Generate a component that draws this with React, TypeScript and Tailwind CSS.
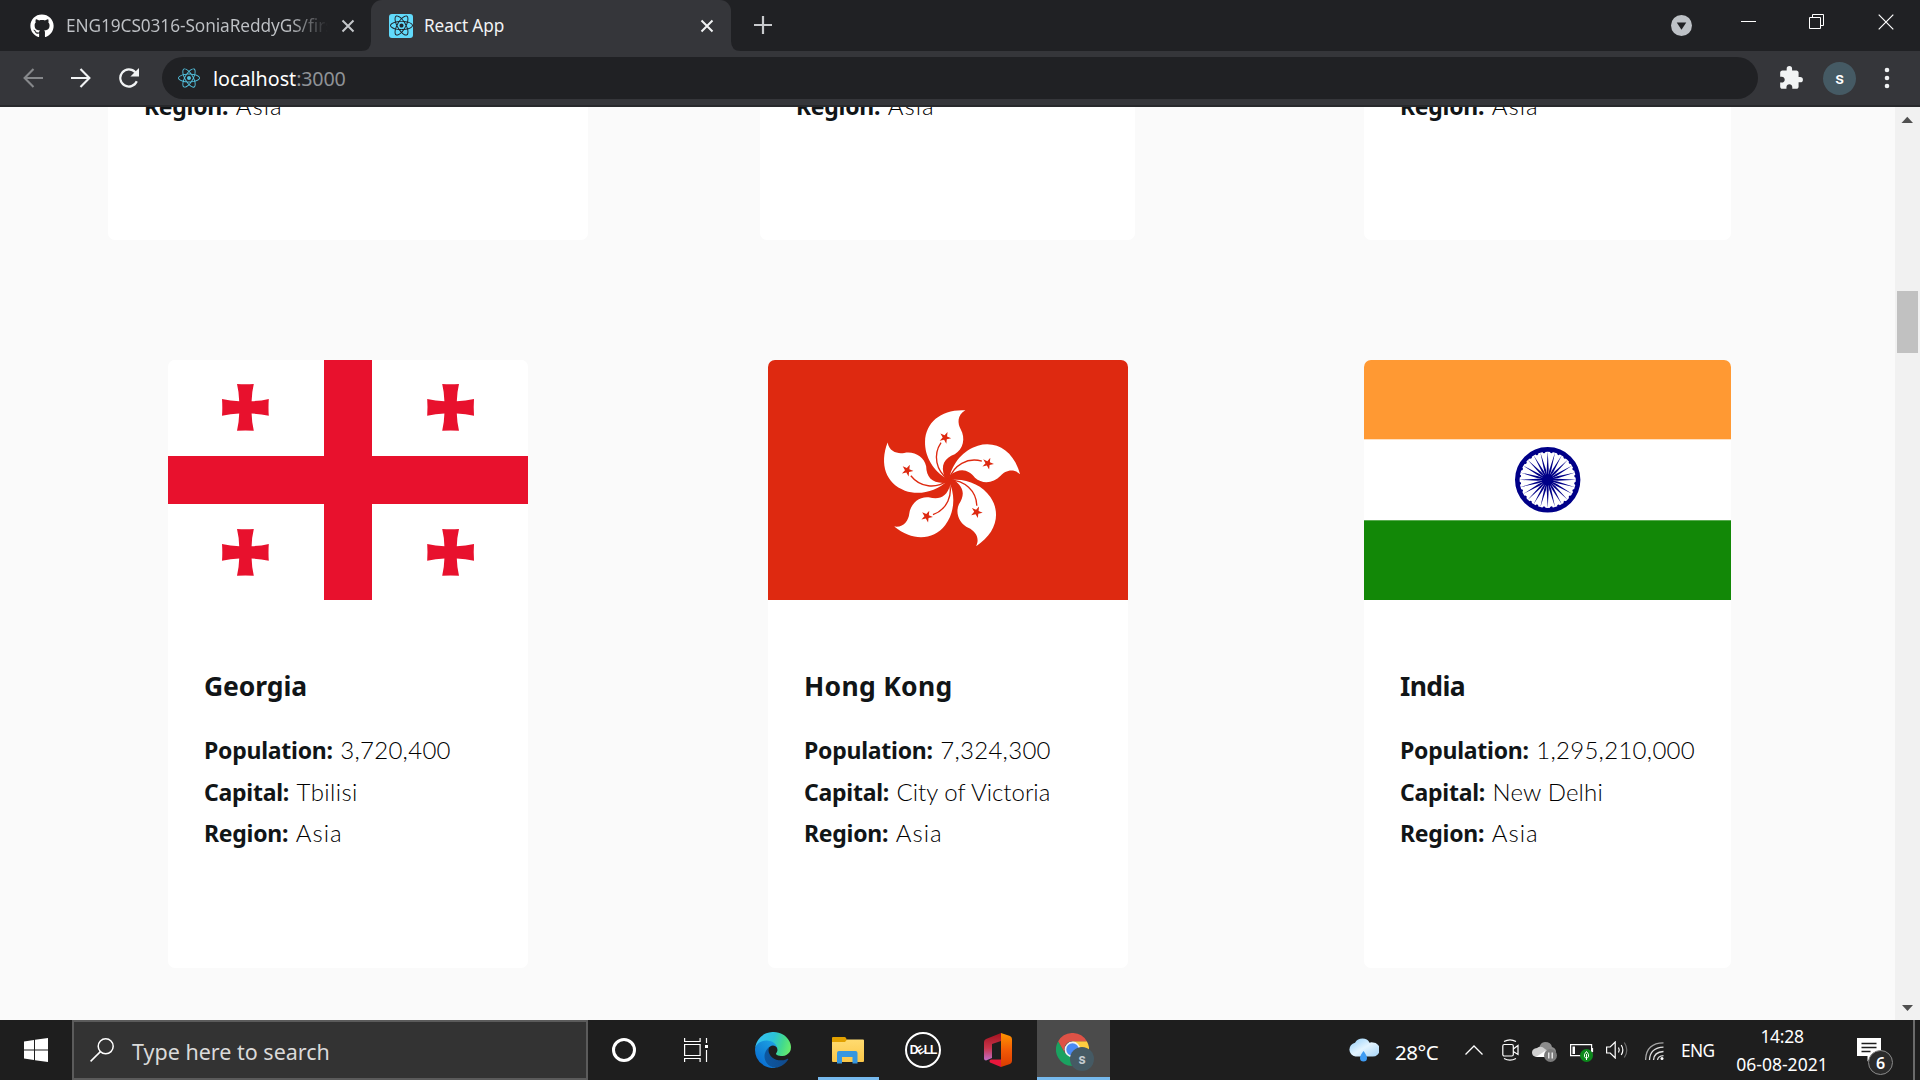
import type { ReactNode } from "react";
import { FaGithub, FaReact } from "react-icons/fa";
import { MdExtension } from "react-icons/md";

/* ---------- Flags ---------- */

function GeorgiaFlag() {
  const centers = [
    [77.4, 47.4],
    [282.6, 47.4],
    [77.4, 192.4],
    [282.6, 192.4],
  ];
  return (
    <svg viewBox="0 0 360 240" className="block h-[240px] w-[360px] rounded-t-[7px]">
      <rect width="360" height="240" fill="#fff" />
      <path d="M156 0h48v96h156v48H204v96h-48v-96H0V96h156z" fill="#e8112d" />
      {centers.map(([x, y]) => (
        <path
          key={`${x}-${y}`}
          transform={`translate(${x} ${y})`}
          fill="#e8112d"
          d="M-8.4-23.4Q0-22.8 8.4-23.4Q6.4-15 6.2-6.2Q15-6.4 23.4-8.4Q22.8 0 23.4 8.4Q15 6.4 6.2 6.2Q6.4 15 8.4 23.4Q0 22.8-8.4 23.4Q-6.4 15-6.2 6.2Q-15 6.4-23.4 8.4Q-22.8 0-23.4-8.4Q-15-6.4-6.2-6.2Q-6.4-15-8.4-23.4z"
        />
      ))}
    </svg>
  );
}

function HongKongFlag() {
  return (
    <svg viewBox="0 0 360 240" className="block h-[240px] w-[360px] rounded-t-[7px]">
      <rect width="360" height="240" fill="#de2910" />
      <g transform="translate(180.7 120) scale(.3333)">
        {[0, 72, 144, 216, 288].map((a) => (
          <g key={a} transform={`rotate(${a})`}>
            <path
              fill="#fff"
              d="M-3-3C-45-25-72-70-71-115C-69-175-20-213 50-209C24-195 27-168 36-152C51-125 44-92 18-77C-12-66-26-45-12-8z"
            />
            <path d="M-23-112C-48-75-38-28-2-2" fill="none" stroke="#de2910" strokeWidth="4" />
            <path
              transform="translate(-11 -127) rotate(24) scale(18.5)"
              fill="#de2910"
              d="M0-1L.225-.309L.951-.309L.363.118L.588.809L0 .382L-.588.809L-.363.118L-.951-.309L-.225-.309z"
            />
          </g>
        ))}
      </g>
    </svg>
  );
}

function IndiaFlag() {
  const spokes = Array.from({ length: 24 }, (_, i) => i * 15);
  return (
    <svg viewBox="0 0 367 240" className="block h-[240px] w-[367px] rounded-t-[7px]">
      <rect width="367" height="240" fill="#fff" />
      <rect width="367" height="79.3" fill="#ff9933" />
      <rect y="160.3" width="367" height="79.7" fill="#128807" />
      <g transform="translate(183.7 119.8)" fill="#000088">
        <circle r="30.4" fill="none" stroke="#000088" strokeWidth="4.6" />
        <circle r="5.8" />
        {spokes.map((a) => (
          <g key={a} transform={`rotate(${a})`}>
            <path d="M0-28.5L1-10L.4 0H-.4L-1-10z" />
            <circle cx="3.7" cy="-28" r="1.4" />
          </g>
        ))}
      </g>
    </svg>
  );
}

/* ---------- Cards ---------- */

function Fact({ label, value, valueClass = "" }: { label: string; value: string; valueClass?: string }) {
  return (
    <div className="flex h-[41.5px] items-baseline whitespace-nowrap leading-[41.5px] text-[#111517]">
      <strong className="font-['Noto_Sans',sans-serif] text-[23px] font-bold tracking-[-0.25px]">{label}:</strong>
      <span className={`ml-[7.5px] font-['Lato',sans-serif] text-[24px] font-light text-black ${valueClass}`}>{value}</span>
    </div>
  );
}

function PartialCard({ width }: { width: string }) {
  return (
    <div className={`h-[133px] overflow-hidden rounded-b-[7px] bg-white px-9 ${width}`}>
      <div className="-mt-[22.5px]">
        <Fact label="Region" value="Asia" valueClass="tracking-[1px]" />
      </div>
    </div>
  );
}

type Country = { name: string; title?: string; flag: ReactNode; width: string; facts: [string, string, string][] };

const countries: Country[] = [
  {
    name: "Georgia",
    title: "tracking-[-0.1px]",
    flag: <GeorgiaFlag />,
    width: "w-[360px]",
    facts: [
      ["Population", "3,720,400", "tracking-[0.3px]"],
      ["Capital", "Tbilisi", "tracking-[0.4px]"],
      ["Region", "Asia", "tracking-[1px]"],
    ],
  },
  {
    name: "Hong Kong",
    title: "tracking-[0.3px]",
    flag: <HongKongFlag />,
    width: "w-[360px]",
    facts: [
      ["Population", "7,324,300", "tracking-[0.3px]"],
      ["Capital", "City of Victoria", "tracking-[0px]"],
      ["Region", "Asia", "tracking-[1px]"],
    ],
  },
  {
    name: "India",
    title: "tracking-[-0.6px]",
    flag: <IndiaFlag />,
    width: "w-[367px]",
    facts: [
      ["Population", "1,295,210,000", "tracking-[0.3px]"],
      ["Capital", "New Delhi", "tracking-[0.15px]"],
      ["Region", "Asia", "tracking-[1px]"],
    ],
  },
];

function CountryCard({ name, title = "", flag, width, facts }: Country) {
  return (
    <article className={`h-[608px] rounded-[7px] bg-white ${width}`}>
      {flag}
      <div className="px-9 pt-[68px]">
        <h2
          className={`mb-[25px] h-9 whitespace-nowrap font-['Noto_Sans',sans-serif] text-[26.5px] font-bold leading-9 text-[#111517] ${title}`}
        >
          {name}
        </h2>
        {facts.map(([label, value, cls]) => (
          <Fact key={label} label={label} value={value} valueClass={cls} />
        ))}
      </div>
    </article>
  );
}

function Scrollbar() {
  return (
    <div className="flex w-[25px] shrink-0 flex-col items-center bg-[#f1f1f1]">
      <svg viewBox="0 0 25 26" className="h-[26px] w-[25px] shrink-0">
        <path d="M6.5 16L12.3 9.8L18 16z" fill="#505050" />
      </svg>
      <div className="mt-[158px] h-[62px] w-[21px] bg-[#c1c1c1]" />
      <svg viewBox="0 0 25 26" className="mt-auto h-[26px] w-[25px] shrink-0">
        <path d="M7 11L12.5 17L18 11z" fill="#505050" />
      </svg>
    </div>
  );
}

/* ---------- Browser chrome ---------- */

function CloseIcon({ color }: { color: string }) {
  return (
    <svg viewBox="0 0 14 14" className="h-3.5 w-3.5 shrink-0">
      <path d="M1.5 1.5l11 11M12.5 1.5l-11 11" stroke={color} strokeWidth="2" />
    </svg>
  );
}

function TabBar() {
  return (
    <div className="flex h-[51px] bg-[#202124] font-['Noto_Sans',sans-serif]">
      <div className="flex h-[51px] w-[371px] items-center pl-[30px]">
        <FaGithub className="h-6 w-6 shrink-0 text-white" />
        <div className="ml-[12px] w-[262px] overflow-hidden whitespace-nowrap bg-gradient-to-r from-[#bfc2c6] from-85% to-transparent bg-clip-text text-[17.3px] leading-7 tracking-[-0.1px] text-transparent">
          ENG19CS0316-SoniaReddyGS/first
        </div>
        <div className="ml-[13px]">
          <CloseIcon color="#c4c7ca" />
        </div>
      </div>
      <div className="relative flex h-[51px] w-[360px] items-center rounded-t-[11px] bg-[#35363a] pl-[18px]">
        <svg viewBox="0 0 10 10" className="absolute bottom-0 -left-[10px] h-[10px] w-[10px]">
          <path d="M10 0v10H0Q10 10 10 0z" fill="#35363a" />
        </svg>
        <svg viewBox="0 0 10 10" className="absolute -right-[10px] bottom-0 h-[10px] w-[10px]">
          <path d="M0 0v10h10Q0 10 0 0z" fill="#35363a" />
        </svg>
        <div className="flex h-6 w-6 items-center justify-center rounded-[3px] bg-[#61dafb]">
          <FaReact className="h-[23px] w-[23px] text-[#20232a]" />
        </div>
        <span className="ml-[11px] text-[17.2px] leading-7 tracking-[-0.1px] text-[#f1f3f4]">React App</span>
        <div className="mr-[17px] ml-auto">
          <CloseIcon color="#f1f3f4" />
        </div>
      </div>
      <svg viewBox="0 0 18 18" className="mt-4 ml-[23px] h-[18px] w-[18px]">
        <path d="M9 0v18M0 9h18" stroke="#c8cacd" strokeWidth="2.2" />
      </svg>
      <div className="ml-auto flex h-[43px] items-center">
        <svg viewBox="0 0 22 22" className="mt-[8px] mr-[49px] h-[21px] w-[21px]">
          <circle cx="11" cy="11" r="11" fill="#bdc1c6" />
          <path d="M6 7.8h10L11 15.5z" fill="#202124" />
        </svg>
        <div className="mr-[53px] h-px w-[15px] bg-white" />
        <svg viewBox="0 0 15 15" className="mr-[54px] h-[15px] w-[15px]" fill="none" stroke="#fff">
          <path d="M.5 3.5h11v11H.5zM3.5 3.5v-3h11v11h-3" />
        </svg>
        <svg viewBox="0 0 16 16" className="mr-[26px] h-4 w-4">
          <path d="M.7.7l14.6 14.6M15.3.7L.7 15.3" stroke="#fff" strokeWidth="1.2" />
        </svg>
      </div>
    </div>
  );
}

function Toolbar() {
  return (
    <div className="flex h-[56px] items-center border-b-2 border-[#28292c] bg-[#35363a] font-['Noto_Sans',sans-serif]">
      <svg viewBox="0 0 20 20" className="ml-[23px] h-5 w-5" fill="none" stroke="#86888b" strokeWidth="2.1">
        <path d="M20 10H1.8M10.5 1L1.6 10l8.9 9" />
      </svg>
      <svg viewBox="0 0 20 20" className="ml-[28px] h-5 w-5" fill="none" stroke="#f1f3f4" strokeWidth="2.1">
        <path d="M0 10h18.2M9.5 1l8.9 9-8.9 9" />
      </svg>
      <svg viewBox="0 0 20 20" className="ml-[28px] h-5 w-5">
        <path d="M17.8 13.3A8.6 8.6 0 1 1 16.3 4.2" fill="none" stroke="#f1f3f4" strokeWidth="2.2" />
        <path d="M20 0v8.6h-8.6z" fill="#f1f3f4" />
      </svg>
      <div className="ml-[23px] flex h-[42px] w-[1596px] items-center rounded-full bg-[#202124] pl-[16px]">
        <FaReact className="h-[22px] w-[22px] text-[#53c1de]" />
        <span className="mt-[2px] ml-[13px] text-[19.7px] leading-8 text-white">localhost</span>
        <span className="mt-[2px] text-[19.7px] leading-8 tracking-[-0.2px] text-[#8f9296]">:3000</span>
      </div>
      <MdExtension className="ml-[20px] h-[26px] w-[26px] text-[#f1f3f4]" />
      <div className="ml-[19px] flex h-[33px] w-[33px] items-center justify-center rounded-full bg-[#455a64] font-['Roboto',sans-serif] text-[17px] font-medium leading-none text-white">
        s
      </div>
      <svg viewBox="0 0 6 22" className="ml-[28px] h-[22px] w-[6px]" fill="#f1f3f4">
        <circle cx="3" cy="3" r="2.3" />
        <circle cx="3" cy="11" r="2.3" />
        <circle cx="3" cy="19" r="2.3" />
      </svg>
    </div>
  );
}

/* ---------- Taskbar icons ---------- */

function EdgeIcon() {
  return (
    <svg viewBox="0 0 256 256" className="h-9 w-9">
      <defs>
        <linearGradient id="edgeA" x1="60" y1="180" x2="240" y2="180" gradientUnits="userSpaceOnUse">
          <stop offset="0" stopColor="#0c59a4" />
          <stop offset="1" stopColor="#114a8b" />
        </linearGradient>
        <linearGradient id="edgeB" x1="150" y1="100" x2="45" y2="220" gradientUnits="userSpaceOnUse">
          <stop offset="0" stopColor="#1b9de2" />
          <stop offset=".5" stopColor="#1488d8" />
          <stop offset="1" stopColor="#0b72d4" />
        </linearGradient>
        <linearGradient id="edgeC" x1="20" y1="60" x2="250" y2="130" gradientUnits="userSpaceOnUse">
          <stop offset="0" stopColor="#35c1f1" />
          <stop offset=".45" stopColor="#2cc3d8" />
          <stop offset=".75" stopColor="#42d98f" />
          <stop offset="1" stopColor="#66eb6e" />
        </linearGradient>
      </defs>
      <g transform="translate(-4.63 -4.92)">
        <path
          fill="url(#edgeA)"
          d="M235.68 195.46a93.73 93.73 0 0 1-10.54 4.71 101.87 101.87 0 0 1-35.9 6.46c-47.32 0-88.54-32.55-88.54-74.32A31.48 31.48 0 0 1 117.13 105c-42.8 1.8-53.8 46.4-53.8 72.53 0 73.88 68.09 81.37 82.76 81.37 7.91 0 19.84-2.3 27-4.56l1.31-.44a128.34 128.34 0 0 0 66.6-52.8 4 4 0 0 0-5.32-5.64z"
        />
        <path
          fill="url(#edgeB)"
          d="M110.34 246.34A79.2 79.2 0 0 1 87.6 225a80.72 80.72 0 0 1 29.53-120c3.12-1.47 8.45-4.13 15.54-4a32.35 32.35 0 0 1 25.69 13 31.88 31.88 0 0 1 6.36 18.66c0-.21 24.46-79.6-80-79.6-43.9 0-80 41.66-80 78.21a130.15 130.15 0 0 0 12.11 56 128 128 0 0 0 156.38 67.11 75.55 75.55 0 0 1-62.78-8z"
        />
        <path
          fill="url(#edgeC)"
          d="M156.94 153.78c-.81 1.05-3.3 2.5-3.3 5.66 0 2.61 1.7 5.12 4.72 7.23 14.38 10 41.49 8.68 41.56 8.68a59.56 59.56 0 0 0 30.27-8.35A61.38 61.38 0 0 0 260.62 114c.26-22.41-8-37.31-11.34-43.91-21.19-41.44-66.93-65.25-116.67-65.25a128 128 0 0 0-128 126.2c.48-36.54 36.8-66.05 80-66.05 3.5 0 23.46.34 42 10.07 16.34 8.58 24.9 18.94 30.85 29.21 6.18 10.67 7.28 24.15 7.28 29.52s-2.74 13.33-7.8 19.99z"
        />
      </g>
    </svg>
  );
}

function ExplorerIcon() {
  return (
    <svg viewBox="0 0 32 28" className="h-7 w-8">
      <defs>
        <linearGradient id="folder" x1="0" y1="0" x2="0" y2="1">
          <stop offset="0" stopColor="#ffdb70" />
          <stop offset="1" stopColor="#fbc748" />
        </linearGradient>
      </defs>
      <path d="M0 2q0-1 1-1h11.5q1 0 1.5 1l1 2v4H0z" fill="#e2a100" />
      <path d="M0 6h13l2-2.5h16q1 0 1 1V25q0 1-1 1H1q-1 0-1-1z" fill="url(#folder)" />
      <path d="M5 27.500V17q0-2 2-2h16.500q2 0 2 2v10.500h-5v-6.500h-10.500v6.500z" fill="#3696df" />
    </svg>
  );
}

function DellIcon() {
  return (
    <div className="flex h-9 w-9 items-center justify-center rounded-full border-2 border-white font-['Liberation_Sans',sans-serif] text-[12px] font-bold leading-none tracking-[-1px] text-white">
      <span>D</span>
      <span className="-rotate-[35deg] text-[11px]">E</span>
      <span>L</span>
      <span>L</span>
    </div>
  );
}

function OfficeIcon() {
  return (
    <svg viewBox="0 0 28 34" className="h-[34px] w-7">
      <defs>
        <linearGradient id="offA" x1="0" y1="0" x2="0" y2="1">
          <stop offset="0" stopColor="#a3111d" />
          <stop offset=".55" stopColor="#c8354c" />
          <stop offset="1" stopColor="#c06fc9" />
        </linearGradient>
        <linearGradient id="offB" x1="0" y1="0" x2="0" y2="1">
          <stop offset="0" stopColor="#ff9500" />
          <stop offset=".5" stopColor="#f25a05" />
          <stop offset="1" stopColor="#d83b01" />
        </linearGradient>
      </defs>
      <path d="M17 0v8L8 11v14L2 27.500q-2 0-2-2V9q0-2 2-3z" fill="url(#offA)" />
      <path d="M17 0l9 3q2 1 2 3v22q0 2-2 3l-9 3z" fill="url(#offB)" />
      <path d="M17 26.500V34L6 29.500q-1.500-2 1-3z" fill="#e8173c" />
    </svg>
  );
}

function ChromeIcon() {
  return (
    <div className="relative -ml-[2px] h-[33px] w-[33px]">
      <svg viewBox="0 0 48 48" className="h-[33px] w-[33px]">
        <path d="M24 24V12h20.800A24 24 0 0 1 24 48L34.400 30z" fill="#ffcd40" />
        <path d="M24 24l10.400 6L24 48A24 24 0 0 1 3.200 12L13.600 30z" fill="#1aa260" />
        <path d="M3.200 12A24 24 0 0 1 44.800 12H24a12 12 0 0 0-10.400 18z" fill="#de5246" />
        <circle cx="24" cy="24" r="11.500" fill="#f1f1f1" />
        <circle cx="24" cy="24" r="9" fill="#4a8af4" />
      </svg>
      <div className="absolute top-[14px] left-[14px] flex h-6 w-6 items-center justify-center rounded-full bg-[#455a64] font-['Roboto',sans-serif] text-[14px] font-bold leading-none text-[#c5ccd0]">
        s
      </div>
    </div>
  );
}

function WeatherIcon() {
  return (
    <svg viewBox="0 0 31 24" className="h-6 w-[31px]">
      <defs>
        <linearGradient id="cloud" x1="0" y1="0" x2="1" y2="1">
          <stop offset="0" stopColor="#8fccf8" />
          <stop offset=".5" stopColor="#e3f4ff" />
          <stop offset="1" stopColor="#a5d4f7" />
        </linearGradient>
      </defs>
      <path
        d="M7.5 18.500a7 7 0 0 1-.5-13.800Q9.500.5 14.500.5q5 0 7 4.200Q23 4 25 4.500a6.800 6.800 0 0 1-.5 14z"
        fill="url(#cloud)"
      />
      <path d="M15.500 13q3.500 4.500 3.500 7a3.500 3.500 0 0 1-7 0q0-2.500 3.500-7z" fill="#3f9cf3" />
    </svg>
  );
}

function TrayIcons() {
  return (
    <>
      <svg viewBox="0 0 18 10" className="ml-[26px] h-[10px] w-[18px]" fill="none" stroke="#fff" strokeWidth="1.3">
        <path d="M.5 9.500L9 1l8.500 8.500" />
      </svg>
      <svg viewBox="0 0 17 22" className="ml-[19px] h-[22px] w-[17px]" fill="none" stroke="#fff" strokeWidth="1.2">
        <path d="M2 2.500Q8-.8 14 2.500M2 19.500q6 3.300 12 0" />
        <rect x=".8" y="5.500" width="10.500" height="11.500" rx="1.500" />
        <path d="M11.300 10L16 6.500v9L11.300 12.500" />
      </svg>
      <svg viewBox="0 0 26 22" className="mt-1 ml-[13px] h-[22px] w-[26px]">
        <path d="M7 8Q8 1 13 1q6 0 7 5 4 1 4 5l-8 4z" fill="#8c8c8c" />
        <path d="M4 16q-4-1-4-4.500Q0 7.500 5 7q4-3 8 1 4 2 5 8z" fill="#cfcfcf" />
        <path d="M4 16l9-6 5 2v4z" fill="#fff" />
        <circle cx="18.500" cy="14.500" r="6.500" fill="#7c7c7c" />
        <path d="M16.800 11.500v6M20.200 11.500v6" stroke="#fff" strokeWidth="1.2" />
      </svg>
      <svg viewBox="0 0 24 20" className="mt-[6px] ml-[12px] h-5 w-6">
        <path d="M.6 1.600h21v11H.6zM22.500 5v4" fill="none" stroke="#fff" strokeWidth="1.2" />
        <path d="M2.500 3.500H5v7.500H2.500z" fill="#fff" />
        <circle cx="16.500" cy="12.500" r="6.500" fill="#0c8a1c" />
        <path d="M16.500 8.500q-3 3-2 5.200 1 1.500 2 1.500t2-1.500q1-2.200-2-5.200zM16.500 11v6" fill="none" stroke="#fff" />
      </svg>
      <svg viewBox="0 0 23 18" className="ml-[12px] h-[18px] w-[23px]" fill="none" stroke="#fff" strokeWidth="1.2">
        <path d="M.6 6v6h3.600l5 5V1l-5 5z" />
        <path d="M12.500 6.500q1.500 2.500 0 5M15.200 4q3.300 5 0 10" />
        <path d="M18.300 1.500q5 7.500 0 15" stroke="#6b6b6b" />
      </svg>
      <svg viewBox="0 0 19 18" className="mt-[2px] ml-[16px] h-[18px] w-[19px]" fill="none" strokeWidth="1.3">
        <path d="M.6 18Q1 1 18.500.8" stroke="#a5a5a5" />
        <path d="M4.500 18Q5 5.800 18.500 5.200M8.500 18Q9 10 18.500 9.500M12.500 18Q13 14 18.500 13.600" stroke="#e0e0e0" />
        <circle cx="17" cy="16.500" r="1.500" fill="#fff" />
      </svg>
    </>
  );
}

function Taskbar() {
  return (
    <div className="flex h-[60px] items-center bg-[#1e1e1e] font-['Noto_Sans',sans-serif] text-white">
      <div className="flex w-[72px] items-center justify-center">
        <svg viewBox="0 0 24 24" className="h-6 w-6" fill="#fff">
          <path d="M0 3.400L10 2v9.500H0zM11 1.800L24 0v11.500H11zM0 12.500h10V22L0 20.600zM11 12.500h13V24l-13-1.800z" />
        </svg>
      </div>
      <div className="flex h-[60px] w-[516px] items-center border-2 border-[#5b5b5b] bg-[#333333] pl-4">
        <svg viewBox="0 0 24 24" className="h-6 w-6" fill="none" stroke="#fff" strokeWidth="1.5">
          <circle cx="15.700" cy="8.300" r="7.500" />
          <path d="M10.400 13.600L.6 23.400" />
        </svg>
        <span className="mt-[3px] ml-[18px] text-[21.5px] leading-8 text-[#dadada]">Type here to search</span>
      </div>
      <div className="flex w-[72px] justify-center">
        <div className="h-6 w-6 rounded-full border-[3px] border-white" />
      </div>
      <div className="flex w-[71px] justify-center">
        <svg viewBox="0 0 24 24" className="h-6 w-6" fill="none" stroke="#fff" strokeWidth="1.2">
          <path d="M.6 0v3.500h15.500V0M.6 24v-3.500h15.500V24M.6 6.500h15.500v11H.6zM22.500 0v5M22.500 12v12" />
          <path d="M21 7h3v3h-3z" fill="#fff" stroke="none" />
        </svg>
      </div>
      <div className="flex w-[84px] justify-center">
        <EdgeIcon />
      </div>
      <div className="ml-[3px] flex h-[60px] w-[61px] items-center justify-center border-b-[3px] border-[#76b9ed] pt-[3px] pr-[1px]">
        <ExplorerIcon />
      </div>
      <div className="flex w-[88px] justify-center">
        <DellIcon />
      </div>
      <div className="flex w-[62px] justify-center">
        <OfficeIcon />
      </div>
      <div className="ml-2 flex h-[60px] w-[73px] items-center justify-center border-b-[3px] border-[#76b9ed] bg-[#4b4b4b] pt-[2px]">
        <ChromeIcon />
      </div>
      <div className="ml-[238px] flex items-center">
        <WeatherIcon />
        <span className="mt-[4px] ml-[16px] w-[44px] whitespace-nowrap text-[20.5px] leading-7 tracking-[-0.5px]">28°C</span>
        <TrayIcons />
        <span className="mt-[2px] ml-[17px] w-[35px] text-[17.3px] leading-6 tracking-[-0.6px]">ENG</span>
      </div>
      <div className="ml-[18px] flex w-[96px] flex-col items-center whitespace-nowrap text-[17.5px] leading-[28px]">
        <span className="tracking-[-0.3px]">14:28</span>
        <span>06-08-2021</span>
      </div>
      <div className="relative ml-[27px] h-6 w-6">
        <svg viewBox="0 0 24 24" className="h-6 w-6">
          <path d="M0 0h24v18h-9l-4.500 5.500V18H0z" fill="#fff" />
          <path d="M4.500 5.500h15M4.500 9.500h15M4.500 13.500h9" stroke="#1e1e1e" strokeWidth="1.3" />
        </svg>
        <div className="absolute top-[12px] left-[11px] flex h-[25px] w-[25px] items-center justify-center rounded-full border border-[#8a8a8a] bg-[#2b2b2b] text-[16px] font-semibold leading-none">
          6
        </div>
      </div>
      <div className="mr-[5px] ml-auto h-[60px] w-[2px] bg-[#6a6a6a]" />
    </div>
  );
}

export default function App() {
  return (
    <div className="flex h-[1080px] w-[1920px] flex-col overflow-hidden">
      <TabBar />
      <Toolbar />
      <div className="flex h-[913px] bg-[#fafafa]">
        <main className="flex-1 overflow-hidden pl-12">
          <div className="grid grid-cols-[600px_600px_599px] justify-items-center">
            <PartialCard width="w-[480px]" />
            <PartialCard width="mr-px w-[375px]" />
            <PartialCard width="w-[367px]" />
          </div>
          <div className="mt-[120px] grid grid-cols-[600px_600px_599px] justify-items-center">
            {countries.map((c) => (
              <CountryCard key={c.name} {...c} />
            ))}
          </div>
        </main>
        <Scrollbar />
      </div>
      <Taskbar />
    </div>
  );
}
